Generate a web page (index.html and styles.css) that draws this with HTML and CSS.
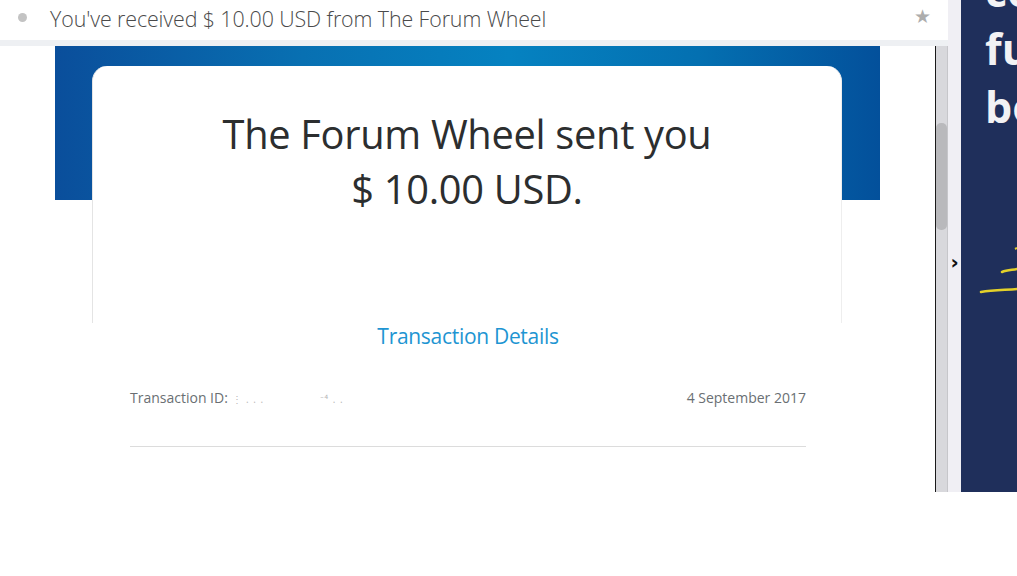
FILE: index.html
```html
<!DOCTYPE html>
<html lang="en">
<head>
<meta charset="utf-8">
<title>You've received $ 10.00 USD from The Forum Wheel</title>
<link rel="stylesheet" href="styles.css">
</head>
<body>
<div class="app">
  <div class="main">
    <header class="subject-bar">
      <span class="dot"></span>
      <h1 class="subject">You've received $ 10.00 USD from The Forum Wheel</h1>
      <span class="star">&#9733;</span>
    </header>
    <div class="strip"></div>
    <div class="content-row">
      <div class="mail">
        <div class="mail-inner">
          <div class="banner"></div>
          <div class="card">
            <p class="headline">The Forum Wheel sent you<br>$ 10.00 USD.</p>
          </div>
          <div class="details">
            <a class="details-link">Transaction Details</a>
            <div class="txn-row">
              <span class="txn-id">Transaction ID: <span class="redacted">&#8942; . . .</span><span class="redacted gap">&#8315;&#8308; . .</span></span>
              <span class="txn-date">4 September 2017</span>
            </div>
            <div class="divider"></div>
          </div>
        </div>
      </div>
      <div class="scrollbar"><div class="thumb"></div></div>
    </div>
  </div>
  <div class="gutter"><span class="chev">&#8250;</span></div>
  <aside class="promo">
    <div class="promo-text">co<br>fu<br>bo</div>
    <svg class="swoosh" width="56" height="60" viewBox="0 0 56 60">
      <path d="M54 4 L56 3" stroke="#e3d12a" stroke-width="2" fill="none"/>
      <path d="M41 27 C46 25 52 25 56 24" stroke="#e3d12a" stroke-width="2.5" fill="none" stroke-linecap="round"/>
      <path d="M20 47 C32 45 45 45 56 44" stroke="#e3d12a" stroke-width="2.5" fill="none" stroke-linecap="round"/>
    </svg>
  </aside>
</div>
</body>
</html>
```

FILE: styles.css
```css
html, body {
  margin: 0;
  padding: 0;
  background: #ffffff;
}
body {
  width: 1017px;
  height: 576px;
  overflow: hidden;
  font-family: "Open Sans", "Noto Sans", sans-serif;
}
.app {
  display: flex;
  height: 492px;
}
.main {
  width: 948px;
  display: flex;
  flex-direction: column;
}
.subject-bar {
  height: 40px;
  display: flex;
  align-items: center;
  background: #ffffff;
  padding-left: 18px;
  padding-right: 18px;
  box-sizing: border-box;
}
.dot {
  width: 9px;
  height: 9px;
  border-radius: 50%;
  background: #c3c3c3;
  margin-right: 23px;
  margin-top: -6px;
}
.subject {
  flex: 1;
  margin: 0;
  font-weight: 300;
  font-size: 21.4px;
  color: #4a4a4a;
  letter-spacing: -0.1px;
  margin-top: -3px;
}
.star {
  color: #adadad;
  font-size: 19px;
  margin-top: -8px;
  margin-right: -1px;
  font-family: "DejaVu Sans", sans-serif;
}
.strip {
  height: 6px;
  background: #eef0f3;
}
.content-row {
  flex: 1;
  display: flex;
}
.mail {
  width: 936px;
  border-right: 1px solid #1a1a1a;
  background: #ffffff;
  overflow: hidden;
}
.mail-inner {
  width: 825px;
  margin-left: 55px;
}
.banner {
  height: 154px;
  background: linear-gradient(to right, #0a4e9b 0%, #0870b2 30%, #0582c1 55%, #0470b1 78%, #03509b 100%);
}
.card {
  margin: -134px 38px 0 37px;
  height: 257px;
  background: #ffffff;
  border-radius: 15px 15px 0 0;
  border-left: 1px solid #e4e4e4;
  border-right: 1px solid #eeeeee;
  box-sizing: border-box;
  padding-top: 40px;
}
.headline {
  margin: 0;
  text-align: center;
  font-size: 39.8px;
  line-height: 55px;
  color: #2c2e2f;
  letter-spacing: -0.3px;
}
.details {
  padding: 0 74px 0 75px;
}
.details-link {
  display: block;
  text-align: center;
  color: #1e95d2;
  font-size: 21px;
  line-height: 26px;
  margin-top: 0;
  letter-spacing: -0.3px;
}
.txn-row {
  display: flex;
  justify-content: space-between;
  margin-top: 40px;
  font-size: 14px;
  line-height: 18px;
  color: #6a6f73;
}
.redacted {
  color: #b8b8b8;
  font-size: 10px;
  letter-spacing: 1px;
}
.gap {
  margin-left: 56px;
}
.divider {
  height: 1px;
  background: #dcdcdc;
  margin-top: 38px;
}
.scrollbar {
  width: 11px;
  background: #d8d8dc;
  border-right: 1px solid #c6c6ca;
  padding-top: 77px;
}
.thumb {
  height: 107px;
  background: #b9b9bc;
  border-radius: 5px;
}
.gutter {
  width: 13px;
  background: #f0eff4;
  display: flex;
  align-items: flex-start;
  justify-content: center;
}
.chev {
  margin-top: 252px;
  font-family: "DejaVu Sans", sans-serif;
  font-size: 20px;
  font-weight: bold;
  color: #111;
  line-height: 20px;
}
.promo {
  flex: 1;
  background: #1f2f5b;
  overflow: hidden;
  position: relative;
}
.promo-text {
  margin-top: -38px;
  margin-left: 24px;
  color: #f2f2f4;
  font-family: "Open Sans", sans-serif;
  font-weight: 700;
  font-size: 43px;
  line-height: 58px;
  white-space: nowrap;
}
.swoosh {
  position: absolute;
  left: 0;
  top: 245px;
}
```
